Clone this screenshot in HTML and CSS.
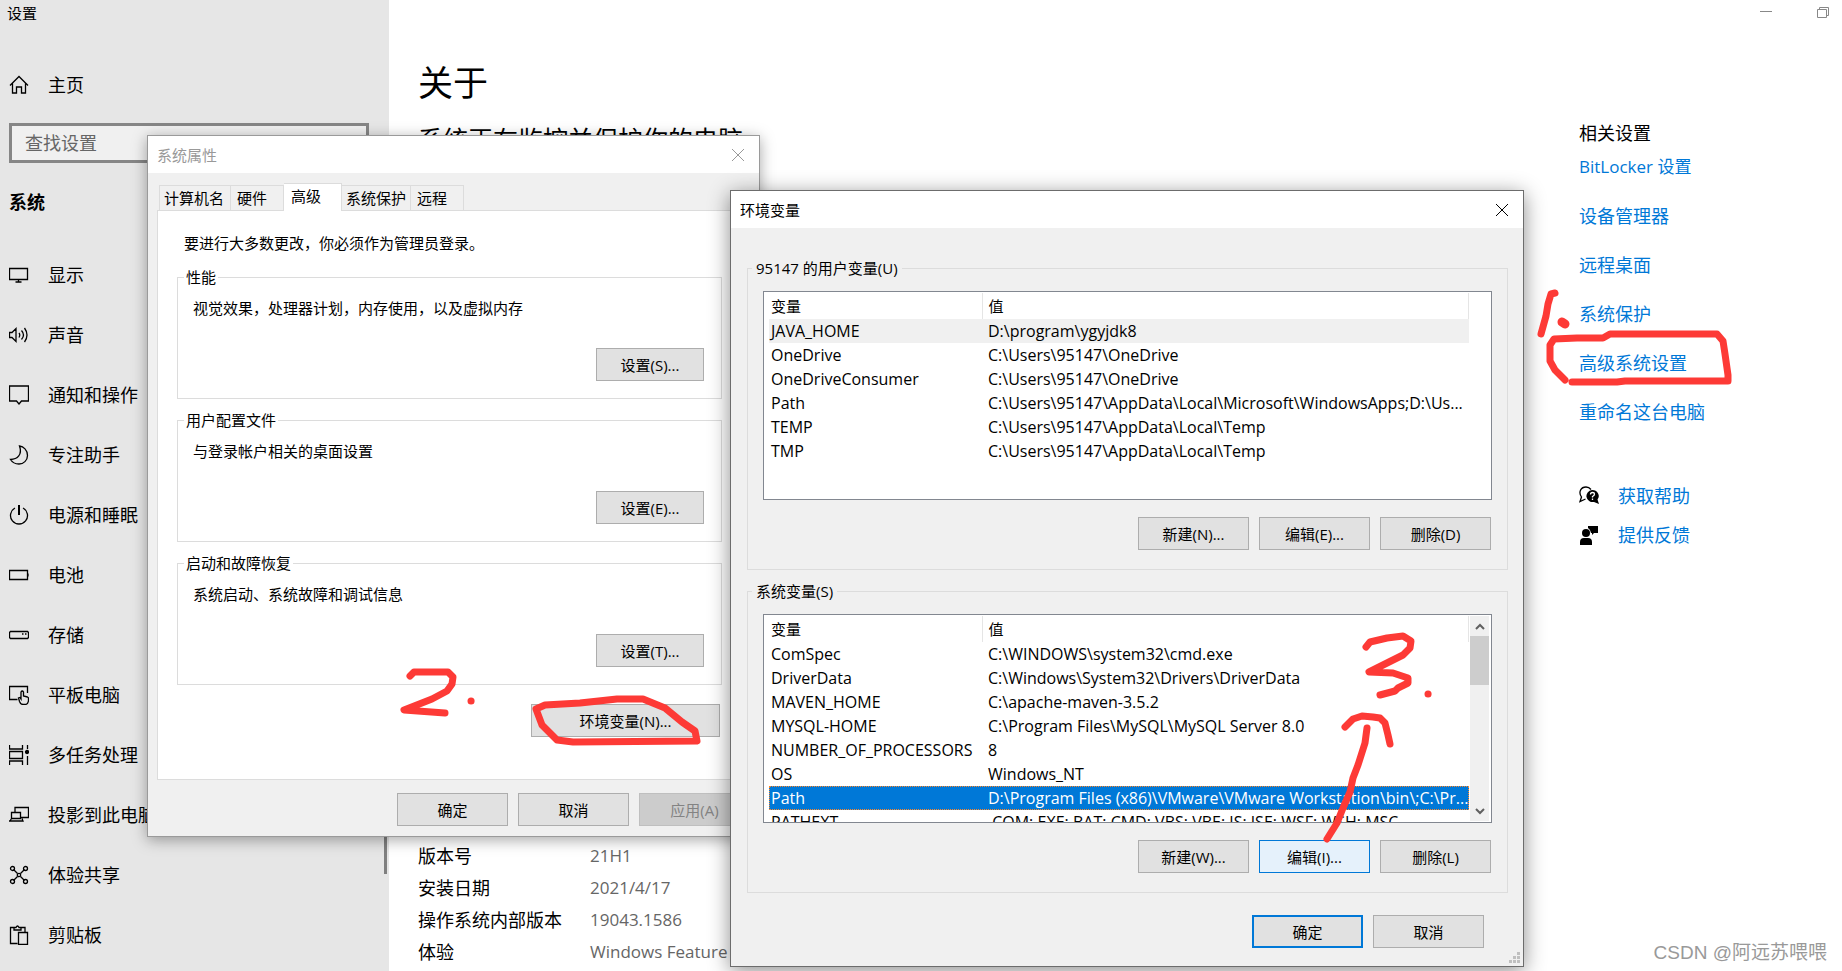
FILE: index.html
```html
<!DOCTYPE html>
<html lang="zh-CN">
  <head>
    <meta charset="UTF-8" />
    <meta name="viewport" content="width=device-width, initial-scale=1.0" />
    <title>设置</title>
    <link rel="stylesheet" href="styles.css">
  </head>
  <body>
    <div class="desktop">
      <!-- 设置窗口 -->
      <div class="settings">
        <aside class="sidebar">
          <div class="app-title">设置</div>
          <a href="#" class="nav-link home-link">
            <svg class="icon" viewBox="0 0 20 20"><path d="M1 10.500 10 1.500l9 9M3.500 8.500v9.500h4v-6h5v6h4V8.500" /></svg>
            主页
          </a>
          <input class="search" type="text" placeholder="查找设置" aria-label="查找设置" />
          <h3 class="nav-title">系统</h3>
          <nav>
            <a href="#" class="nav-link">
              <svg class="icon" viewBox="0 0 20 20"><path d="M.5 3.500h18v11H.5zM9.500 14.500v2.500M6.500 17h6" /></svg>
              显示
            </a>
            <a href="#" class="nav-link">
              <svg class="icon" viewBox="0 0 20 20"><path d="M.5 7.500h2.500l4-4v13l-4-4H.5zM10 8q1.500 2 0 4.500M12.500 5.500q4 4.500 0 9M15.500 3q5 7 0 14" /></svg>
              声音
            </a>
            <a href="#" class="nav-link">
              <svg class="icon" viewBox="0 0 20 20"><path d="M.5 1h19v15H12.500l-2.500 3-2.500-3h-7z" /></svg>
              通知和操作
            </a>
            <a href="#" class="nav-link">
              <svg class="icon" viewBox="0 0 20 20"><path d="M10.500 1c4 .5 8 4 8 9.500 0 5-4 8.500-8.500 8.500-4 0-7-2-8.500-4.500 7 0 12-5 9-13.500z" /></svg>
              专注助手
            </a>
            <a href="#" class="nav-link">
              <svg class="icon" viewBox="0 0 20 20"><path d="M10 0v10" stroke-width="2" /><path d="M6 3a8.500 8.500 0 1 0 8 0" /></svg>
              电源和睡眠
            </a>
            <a href="#" class="nav-link">
              <svg class="icon" viewBox="0 0 20 20"><path d="M.5 5.500h18v9H.5zM19 8.500v3" /></svg>
              电池
            </a>
            <a href="#" class="nav-link">
              <svg class="icon" viewBox="0 0 20 20"><path d="M1.500 6.500h17l1 1v5l-1 1h-17l-1-1v-5zM13 9h1.500M16 9h1.500" /></svg>
              存储
            </a>
            <a href="#" class="nav-link">
              <svg class="icon" viewBox="0 0 20 20"><path d="M8.500 14.500h-8v-13h18V8" /><path d="M12 14V7q1.250-2 2.500 0v4l4 1q1 .3 1 1.500v2q-.5 4-3.500 4h-2q-2.500 0-3.500-3l-1-3.500 1.500-.5z" /></svg>
              平板电脑
            </a>
            <a href="#" class="nav-link">
              <svg class="icon" viewBox="0 0 20 20"><path d="M.5 0v4h13V0M.5 6.500h13v7H.5zM.5 20v-4h13v4M18.500 0v4M18.500 11v9" /><circle cx="18" cy="7" r="1.500" fill="currentColor" /></svg>
              多任务处理
            </a>
            <a href="#" class="nav-link">
              <svg class="icon" viewBox="0 0 20 20"><path d="M6 7V2.500h13.500v10H12M2.500 7.500h9v6h-9zM0 16h14l-1-2.500M2.500 13.500 1 16" /></svg>
              投影到此电脑
            </a>
            <a href="#" class="nav-link">
              <svg class="icon" viewBox="0 0 20 20"><path d="m4.500 4.500 4 4m3 3 4 4m0-11-4 4m-3 3-4 4" /><circle cx="3.500" cy="3.500" r="2" /><circle cx="16.500" cy="3.500" r="2" /><circle cx="3.500" cy="16.500" r="2" /><circle cx="16.500" cy="16.500" r="2" /><circle cx="10" cy="10" r="1.700" /></svg>
              体验共享
            </a>
            <a href="#" class="nav-link">
              <svg class="icon" viewBox="0 0 20 20"><path d="M8.500 18.500h-7v-16H5V5h7V2.500h4V7M5 2.500h2q1.500-3 3 0h2M9.500 7.500h9v12h-9z" /></svg>
              剪贴板
            </a>
          </nav>
          <div class="sidebar-scroll"></div>
        </aside>

        <main class="content">
          <h1>关于</h1>
          <h2>系统正在监控并保护你的电脑</h2>
          <dl class="specs">
            <dt>版本号</dt>
            <dd>21H1</dd>
            <dt>安装日期</dt>
            <dd>2021/4/17</dd>
            <dt>操作系统内部版本</dt>
            <dd>19043.1586</dd>
            <dt>体验</dt>
            <dd>Windows Feature Experience Pack</dd>
          </dl>
        </main>

        <aside class="related">
          <div class="window-controls">
            <button type="button" aria-label="最小化">
              <svg viewBox="0 0 12 12"><path d="M0 4.500h12" /></svg>
            </button>
            <button type="button" aria-label="还原">
              <svg viewBox="0 0 12 12"><path d="M.5 2.500h9v8h-9zM2.500 2.500v-2h9v8h-2" /></svg>
            </button>
          </div>
          <h3>相关设置</h3>
          <a href="#" class="link-latin">BitLocker 设置</a>
          <a href="#">设备管理器</a>
          <a href="#">远程桌面</a>
          <a href="#">系统保护</a>
          <a href="#">高级系统设置</a>
          <a href="#">重命名这台电脑</a>
          <div class="support">
            <a href="#">
              <svg class="icon" viewBox="0 0 20 20"><path d="M6.500 13 1 15.500 2.500 11C-1 6 2 1 7 1q3 0 5 2.500" /><path d="M13 4a6.500 6 0 0 1 5.500 9.500l1.500 4.500-5-2a6.500 6 0 1 1-2-12z" fill="#000" stroke="none" /><path d="M11.500 8.500q0-2 2-2t2 1.500-2 2.500v1M13.500 12.500v1.500" stroke="#fff" /></svg>
              获取帮助
            </a>
            <a href="#">
              <svg class="icon" viewBox="0 0 20 20"><g fill="#000" stroke="none"><circle cx="7" cy="8" r="4" /><path d="M1 20v-3q0-4 4-4h4q4 0 4 4v3zM9 1h10v7h-4l-2 2V8h-1q0-3-3-5z" /></g></svg>
              提供反馈
            </a>
          </div>
        </aside>
      </div>

      <!-- 系统属性 -->
      <section class="dialog dialog-properties">
        <header class="dialog-title">
          系统属性
          <button type="button" class="close" aria-label="关闭">
            <svg viewBox="0 0 12 12"><path d="m0 0 12 12M12 0 0 12" /></svg>
          </button>
        </header>
        <div class="tabs">
          <button type="button" class="tab tab-wide">计算机名</button>
          <button type="button" class="tab">硬件</button>
          <button type="button" class="tab tab-active">高级</button>
          <button type="button" class="tab tab-wide">系统保护</button>
          <button type="button" class="tab">远程</button>
        </div>
        <div class="tab-panel">
          <p class="hint">要进行大多数更改，你必须作为管理员登录。</p>
          <fieldset class="group">
            <legend>性能</legend>
            <p>视觉效果，处理器计划，内存使用，以及虚拟内存</p>
            <button type="button" class="btn">设置(S)...</button>
          </fieldset>
          <fieldset class="group">
            <legend>用户配置文件</legend>
            <p>与登录帐户相关的桌面设置</p>
            <button type="button" class="btn">设置(E)...</button>
          </fieldset>
          <fieldset class="group">
            <legend>启动和故障恢复</legend>
            <p>系统启动、系统故障和调试信息</p>
            <button type="button" class="btn">设置(T)...</button>
          </fieldset>
          <button type="button" class="btn btn-env">环境变量(N)...</button>
        </div>
        <div class="buttons">
          <button type="button" class="btn">确定</button>
          <button type="button" class="btn">取消</button>
          <button type="button" class="btn" disabled>应用(A)</button>
        </div>
      </section>

      <!-- 环境变量 -->
      <section class="dialog dialog-env">
        <header class="dialog-title">
          环境变量
          <button type="button" class="close" aria-label="关闭">
            <svg viewBox="0 0 12 12"><path d="m0 0 12 12M12 0 0 12" /></svg>
          </button>
        </header>
        <div class="env-body">
          <fieldset class="vars">
            <legend>95147 的用户变量(U)</legend>
            <div class="list">
              <table>
                <thead>
                  <tr><th class="col-name">变量</th><th>值</th></tr>
                </thead>
                <tbody>
                  <tr class="row-muted"><td>JAVA_HOME</td><td>D:\program\ygyjdk8</td></tr>
                  <tr><td>OneDrive</td><td>C:\Users\95147\OneDrive</td></tr>
                  <tr><td>OneDriveConsumer</td><td>C:\Users\95147\OneDrive</td></tr>
                  <tr><td>Path</td><td>C:\Users\95147\AppData\Local\Microsoft\WindowsApps;D:\Us...</td></tr>
                  <tr><td>TEMP</td><td>C:\Users\95147\AppData\Local\Temp</td></tr>
                  <tr><td>TMP</td><td>C:\Users\95147\AppData\Local\Temp</td></tr>
                </tbody>
              </table>
            </div>
            <div class="buttons">
              <button type="button" class="btn">新建(N)...</button>
              <button type="button" class="btn">编辑(E)...</button>
              <button type="button" class="btn">删除(D)</button>
            </div>
          </fieldset>
          <fieldset class="vars">
            <legend>系统变量(S)</legend>
            <div class="list">
              <table>
                <thead>
                  <tr><th class="col-name">变量</th><th>值</th></tr>
                </thead>
                <tbody>
                  <tr><td>ComSpec</td><td>C:\WINDOWS\system32\cmd.exe</td></tr>
                  <tr><td>DriverData</td><td>C:\Windows\System32\Drivers\DriverData</td></tr>
                  <tr><td>MAVEN_HOME</td><td>C:\apache-maven-3.5.2</td></tr>
                  <tr><td>MYSQL-HOME</td><td>C:\Program Files\MySQL\MySQL Server 8.0</td></tr>
                  <tr><td>NUMBER_OF_PROCESSORS</td><td>8</td></tr>
                  <tr><td>OS</td><td>Windows_NT</td></tr>
                  <tr class="row-selected"><td>Path</td><td>D:\Program Files (x86)\VMware\VMware Workstation\bin\;C:\Pr...</td></tr>
                  <tr><td>PATHEXT</td><td>.COM;.EXE;.BAT;.CMD;.VBS;.VBE;.JS;.JSE;.WSF;.WSH;.MSC</td></tr>
                </tbody>
              </table>
              <div class="scrollbar">
                <svg viewBox="0 0 20 20"><path d="m6 13 4-4 4 4" /></svg>
                <div class="thumb"></div>
                <svg viewBox="0 0 20 20"><path d="m6 8 4 4 4-4" /></svg>
              </div>
            </div>
            <div class="buttons">
              <button type="button" class="btn">新建(W)...</button>
              <button type="button" class="btn btn-hover">编辑(I)...</button>
              <button type="button" class="btn">删除(L)</button>
            </div>
          </fieldset>
          <div class="buttons env-footer">
            <button type="button" class="btn btn-default">确定</button>
            <button type="button" class="btn">取消</button>
          </div>
        </div>
        <svg class="grip" viewBox="0 0 11 11"><path d="M8 0h3v3H8zM4 4h3v3H4zM8 4h3v3H8zM0 8h3v3H0zM4 8h3v3H4zM8 8h3v3H8z" /></svg>
      </section>

      <!-- 手绘步骤标记 -->
      <svg class="marks" width="1842" height="971" viewBox="0 0 1842 971">
        <path d="M1555 293l-4 1-3 10-2 12-5 18" />
        <path d="M1562 322l3 2" stroke-width="9" />
        <path d="M1565 380l-10-10-5-9v-16l4-6 23-1h26l7-4h107l6 7 2 13 3 21v6h-103l-8 1h-45" />
        <path d="M410 676l4-4h34l5 5-1 7-5 7-15 8-28 11 41 3" />
        <path d="M471 701h.1" />
        <path d="M557 740l-15-15-6-16 9-4 35-2 37-4h26l22 9 17 14 13 9 2 10-124 1z" />
        <path d="M1366 647l4-5 17-4 16-2 8 5-1 7-7 7-26 13-8 4 24 1 15 5v5l-10 5-3 3-15 4" />
        <path d="M1428 694h.1" />
        <path d="M1345 727l8-8 9-3 11 1 7 1 5 5 3 12 2 9" />
        <path d="M1367 728l-2 15-7 22-5 13-3 14-7 16-6 15-10 16" />
      </svg>
      <div class="watermark">CSDN @阿远苏喂喂</div>
    </div>
  </body>
</html>
```
FILE: styles.css
```css
/* ======= 变量 ======= */
:root {
  --font-family: "Open Sans", "Noto Sans CJK SC", sans-serif;
  --color-sidebar: #e6e6e6;
  --color-dialog: #f0f0f0;
  --color-line: #dcdcdc;
  --color-accent: #0078d7;
  --color-secondary: #666;
  --color-mark: #fd3a36;
}

/* ======= 全局样式 ======= */
* {
  box-sizing: border-box;
  margin: 0;
  padding: 0;
}

body {
  font-family: var(--font-family);
  font-size: 15px;
  line-height: 20px;
  color: #000;
  background-color: #fff;
}

button,
input {
  font-family: inherit;
  font-size: inherit;
  line-height: inherit;
  color: inherit;
}

svg {
  display: block;
  fill: none;
  stroke: currentColor;
}

a {
  color: var(--color-accent);
  text-decoration: none;
}

.desktop {
  position: relative;
  min-height: 100vh;
  overflow: hidden;
}

.icon {
  width: 20px;
  height: 20px;
  flex-shrink: 0;
  stroke-width: 1.3;
}

/* ======= 设置窗口 ======= */
.settings {
  display: flex;
  min-height: 100vh;
  font-size: 18px;
  line-height: 32px;
}

.sidebar {
  position: relative;
  width: 389px;
  flex-shrink: 0;
  background-color: var(--color-sidebar);
}

.app-title {
  padding-left: 7px;
  font-size: 15px;
  line-height: 26px;
}

.nav-link {
  display: flex;
  align-items: center;
  gap: 19px;
  height: 60px;
  padding-left: 9px;
  color: #000;
}

.home-link {
  margin-top: 29px;
}

.search {
  display: block;
  width: 360px;
  height: 40px;
  margin: 8px 0 0 9px;
  padding: 0 13px;
  border: 3px solid #868686;
  background-color: #f0f0f0;
}

.search::placeholder {
  color: var(--color-secondary);
}

.nav-title {
  margin: 23px 0 27px;
  padding-left: 9px;
  font-size: 18px;
}

.sidebar-scroll {
  position: absolute;
  top: 243px;
  right: 2px;
  width: 3px;
  height: 631px;
  background-color: #808080;
}

.content {
  display: flex;
  flex: 1;
  flex-direction: column;
  padding: 60px 0 3px 29px;
}

h1 {
  font-size: 35px;
  font-weight: normal;
  line-height: 46px;
}

h2 {
  margin-top: 16px;
  font-size: 25px;
  font-weight: normal;
  line-height: 34px;
}

.specs {
  display: grid;
  grid-template-columns: 172px 1fr;
  margin-top: auto;
}

.specs dd {
  font-size: 17px;
  color: var(--color-secondary);
}

.related {
  width: 263px;
}

.related h3 {
  margin-top: 87px;
  font-size: 18px;
  font-weight: normal;
}

.related > a {
  display: block;
  margin-bottom: 17px;
}

.related h3 + a {
  margin-top: 2px;
}

.related .link-latin {
  font-size: 17px;
}

.window-controls {
  display: flex;
  justify-content: flex-end;
  gap: 45px;
  height: 30px;
  padding: 7px 13px 0 0;
  color: #888;
}

.window-controls button {
  width: 12px;
  height: 12px;
  border: none;
  background: none;
}

.support {
  display: flex;
  flex-direction: column;
  gap: 7px;
  margin-top: 52px;
}

.support a {
  display: flex;
  align-items: center;
  gap: 19px;
}

.support .icon {
  color: #000;
}

/* ======= 对话框 ======= */
.dialog {
  position: absolute;
  border: 1px solid #9a9a9a;
  background-color: var(--color-dialog);
  box-shadow: 0 3px 14px rgba(0, 0, 0, 0.35);
}

.dialog-properties {
  top: 135px;
  left: 147px;
  width: 613px;
  height: 702px;
}

.dialog-env {
  top: 190px;
  left: 730px;
  width: 794px;
  height: 777px;
  border-color: #6c6c6c;
  box-shadow: 0 4px 20px rgba(0, 0, 0, 0.45);
}

.dialog-title {
  display: flex;
  align-items: center;
  justify-content: space-between;
  height: 37px;
  padding: 0 15px 0 9px;
  background-color: #fff;
}

.dialog-properties .dialog-title {
  color: #999;
}

.close {
  width: 12px;
  height: 12px;
  border: none;
  background: none;
}

.btn {
  width: 111px;
  height: 33px;
  border: 1px solid #adadad;
  background-color: #e1e1e1;
}

.btn:disabled {
  border-color: #bfbfbf;
  background-color: #ccc;
  color: #838383;
}

.btn-hover {
  border-color: var(--color-accent);
  background-color: #e5f1fb;
}

.btn-default {
  border: 2px solid var(--color-accent);
}

.buttons {
  display: flex;
  justify-content: flex-end;
  gap: 10px;
}

fieldset {
  border: 1px solid var(--color-line);
}

legend {
  margin-left: -9px;
  padding: 0 2px;
}

/* ======= 系统属性 ======= */
.tabs {
  display: flex;
  align-items: flex-end;
  height: 37px;
  padding-left: 11px;
}

.tab {
  width: 53px;
  height: 25px;
  padding-left: 6px;
  border: 1px solid var(--color-line);
  border-width: 1px 1px 0 0;
  background-color: var(--color-dialog);
  text-align: left;
  white-space: nowrap;
}

.tab-wide {
  width: 69px;
  padding-left: 4px;
}

.tab:first-child {
  width: 72px;
  border-left-width: 1px;
}

.tab-active {
  z-index: 1;
  width: 58px;
  height: 28px;
  margin-bottom: -1px;
  padding: 0 0 4px 7px;
  background-color: #fff;
}

.tab-panel {
  height: 570px;
  margin: 0 9px 13px;
  padding: 22px 27px 0 19px;
  border: 1px solid var(--color-line);
  background-color: #fff;
}

.hint {
  margin-bottom: 14px;
  padding-left: 7px;
}

.group {
  height: 132px;
  margin-bottom: 11px;
  padding: 0 17px 0 15px;
}

.group p {
  margin: 11px 0 30px;
}

.group .btn {
  display: block;
  width: 108px;
  margin-left: auto;
}

.btn-env {
  display: block;
  width: 189px;
  margin: 19px 2px 0 auto;
}

.dialog-properties > .buttons {
  padding-right: 9px;
}

/* ======= 环境变量 ======= */
.env-body {
  padding: 30px 15px 0 16px;
}

.vars {
  margin-bottom: 11px;
  padding: 0 15px 19px;
}

.vars legend {
  margin-left: -11px;
  padding: 0 4px;
}

.list {
  display: flex;
  justify-content: space-between;
  height: 209px;
  margin: 13px 0 17px;
  padding: 1px 2px 1px 5px;
  border: 1px solid #828790;
  background-color: #fff;
  overflow: hidden;
}

.list table {
  width: 700px;
  height: 0;
  table-layout: fixed;
  border-collapse: collapse;
}

.list th {
  height: 26px;
  border-right: 1px solid #e5e5e5;
  font-weight: normal;
}

.list th,
.list td {
  padding: 0 0 0 6px;
  text-align: left;
  white-space: nowrap;
}

.list td {
  height: 24px;
  font-size: 16px;
}

.list tr > :first-child {
  padding-left: 2px;
}

.col-name {
  width: 213px;
}

.row-muted {
  background-color: var(--color-dialog);
}

.row-selected {
  outline: 1px dotted #ff8728;
  outline-offset: -1px;
  background-color: var(--color-accent);
  color: #fff;
}

.scrollbar {
  display: flex;
  flex-direction: column;
  width: 19px;
  background-color: var(--color-dialog);
  color: #606060;
}

.scrollbar svg {
  width: 20px;
  height: 20px;
  stroke-width: 2;
}

.scrollbar svg:last-child {
  margin-top: auto;
}

.thumb {
  height: 49px;
  background-color: #cdcdcd;
}

.vars .buttons {
  padding-right: 1px;
}

.env-footer {
  margin-top: 22px;
  padding-right: 24px;
}

.grip {
  position: absolute;
  right: 3px;
  bottom: 3px;
  width: 11px;
  height: 11px;
  fill: #bfbfbf;
  stroke: none;
}

/* ======= 标记与水印 ======= */
.marks {
  position: absolute;
  top: 0;
  left: 0;
  color: var(--color-mark);
  stroke-width: 7;
  stroke-linecap: round;
  stroke-linejoin: round;
  pointer-events: none;
}

.watermark {
  position: absolute;
  right: 15px;
  bottom: 6px;
  font-family: "Liberation Sans", "Noto Sans CJK SC", sans-serif;
  font-size: 19px;
  line-height: 24px;
  color: #999;
}
```
